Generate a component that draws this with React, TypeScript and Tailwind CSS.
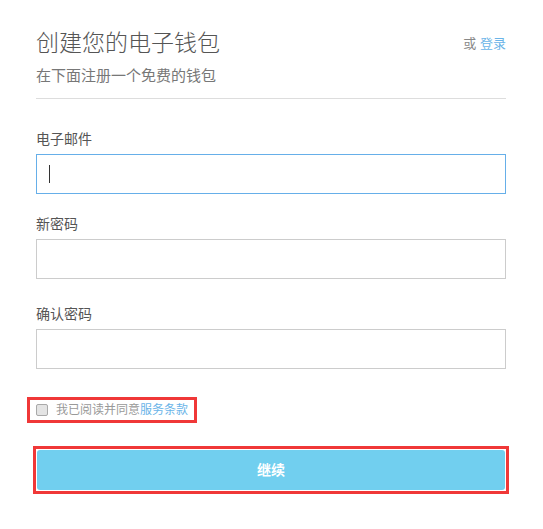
import { useState } from 'react'

const FONT = "font-['Liberation_Sans','Noto_Sans_CJK_SC',sans-serif]"

function Field({ label, top, focused }: { label: string; top: string; focused?: boolean }) {
    return (
        <div className={top}>
            <label className="block text-[14px] leading-[20px] text-[#555]">{label}</label>
            <div
                className={`mt-[5px] h-[40px] w-full border bg-white flex items-center px-[12px] ${
                    focused ? 'border-[#66afe9]' : 'border-[#ccc]'
                }`}
            >
                {focused && <span className="block w-px h-[18px] bg-[#333]" />}
            </div>
        </div>
    )
}

export default function App() {
    const [agree, setAgree] = useState(false)

    return (
        <div className={`${FONT} w-[543px] h-[529px] bg-white px-[36px] pt-[28px]`}>
            <div className="w-[470px]">
                <div className="flex justify-between items-start">
                    <h1 className="text-[23px] leading-[30px] font-light text-[#555]">创建您的电子钱包</h1>
                    <div className="mt-[6px] text-[13px] leading-[20px] text-[#888]">
                        或 <a className="text-[#6ab4e8]">登录</a>
                    </div>
                </div>
                <p className="mt-[7px] text-[15px] leading-[22px] text-[#777]">在下面注册一个免费的钱包</p>
                <div className="mt-[11px] border-t border-[#ddd]" />

                <Field label="电子邮件" top="mt-[30px]" focused />
                <Field label="新密码" top="mt-[20px]" />
                <Field label="确认密码" top="mt-[25px]" />

                <label
                    className="mt-[31px] -ml-[6px] inline-flex h-[20px] items-center pl-[6px] pr-[6px] outline-[3px] outline-solid outline-[#f03838] cursor-pointer"
                    onClick={() => setAgree(!agree)}
                >
                    <span
                        className={`block w-[12px] h-[12px] rounded-[2px] border border-[#a9a9a9] ${
                            agree ? 'bg-[#6fcdee]' : 'bg-[#e4e4e4]'
                        }`}
                    />
                    <span className="ml-[8px] text-[12px] leading-[20px] text-[#999]">
                        我已阅读并同意<a className="text-[#6ab4e8]">服务条款</a>
                    </span>
                </label>

                <div className="mt-[26px] p-px bg-white outline-[3px] outline-solid outline-[#f03838]">
                    <button className="block w-full h-[40px] rounded-[3px] bg-[#71cfef] text-white text-[14px] font-bold">
                        继续
                    </button>
                </div>
            </div>
        </div>
    )
}
